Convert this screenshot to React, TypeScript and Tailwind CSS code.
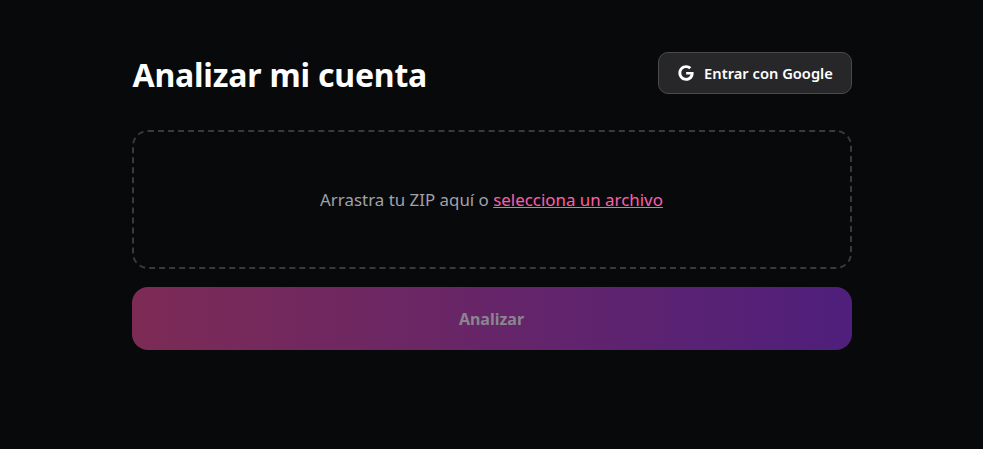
import React from "react";
import { FaGoogle } from "react-icons/fa";

const App: React.FC = () => {
  return (
    <div className="min-h-screen bg-[#08090b] font-['Noto_Sans','Open_Sans',sans-serif] text-white">
      <main className="mx-auto w-[720px] pt-[52px]">
        <header className="flex items-center justify-between">
          <h1 className="h-[42px] pl-px text-[32px] font-bold leading-[46px] tracking-[-0.2px]">Analizar mi cuenta</h1>
          <button className="flex h-[42px] w-[194px] items-center justify-center gap-[10px] rounded-[10px] border border-[#4a4a4d] bg-[#27272a] pl-[2px] text-[14.7px] font-semibold">
            <FaGoogle size={16} />
            Entrar con Google
          </button>
        </header>

        {/* Dropzone */}
        <div className="mt-[36px] flex h-[139px] items-center justify-center rounded-2xl border-2 border-dashed border-[#3a3a3d] text-[16.9px] text-[#a1a1aa]">
          <p>
            Arrastra tu ZIP aquí o <span className="text-[#ff5fa8] underline">selecciona un archivo</span>
          </p>
        </div>

        <button className="mt-[18px] h-[63px] w-full rounded-2xl bg-linear-to-r/srgb from-[#7d2b55] to-[#4f1f7c] text-base font-bold text-[#8a8590]">
          Analizar
        </button>
      </main>
    </div>
  );
};

export default App;
